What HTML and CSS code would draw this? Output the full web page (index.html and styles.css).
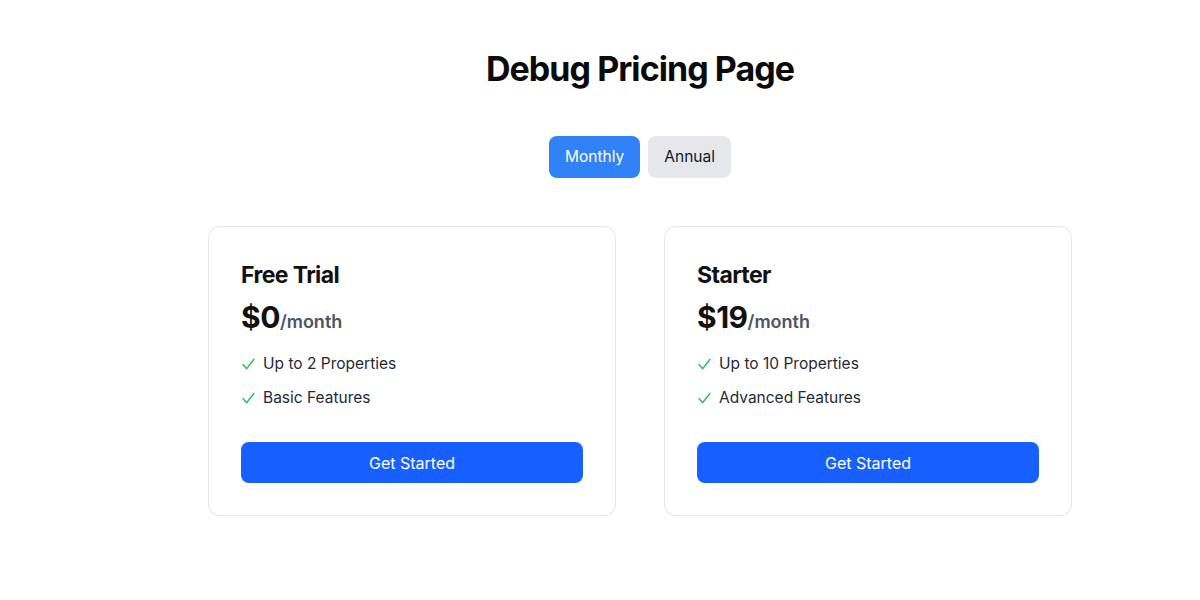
FILE: index.html
```html
<!DOCTYPE html>
<html lang="en">
<head>
<meta charset="utf-8">
<title>Debug Pricing Page</title>
<link rel="stylesheet" href="styles.css">
</head>
<body>
<main class="page">
  <h1 class="title">Debug Pricing Page</h1>
  <div class="toggle">
    <button class="toggle-btn active">Monthly</button>
    <button class="toggle-btn">Annual</button>
  </div>
  <section class="cards">
    <article class="card">
      <h2 class="plan">Free Trial</h2>
      <div class="price"><span class="amount">$0</span><span class="period">/month</span></div>
      <ul class="features">
        <li><svg class="check" viewBox="0 0 13 12" width="13" height="12"><polyline points="1,6.5 4.6,10.8 12,1.2"/></svg>Up to 2 Properties</li>
        <li><svg class="check" viewBox="0 0 13 12" width="13" height="12"><polyline points="1,6.5 4.6,10.8 12,1.2"/></svg>Basic Features</li>
      </ul>
      <button class="cta">Get Started</button>
    </article>
    <article class="card">
      <h2 class="plan">Starter</h2>
      <div class="price"><span class="amount">$19</span><span class="period">/month</span></div>
      <ul class="features">
        <li><svg class="check" viewBox="0 0 13 12" width="13" height="12"><polyline points="1,6.5 4.6,10.8 12,1.2"/></svg>Up to 10 Properties</li>
        <li><svg class="check" viewBox="0 0 13 12" width="13" height="12"><polyline points="1,6.5 4.6,10.8 12,1.2"/></svg>Advanced Features</li>
      </ul>
      <button class="cta">Get Started</button>
    </article>
  </section>
</main>
</body>
</html>
```

FILE: styles.css
```css
* { box-sizing: border-box; }
body {
  margin: 0;
  background: #ffffff;
  color: #111111;
  font-family: "Inter", "Noto Sans", sans-serif;
}
.page {
  padding: 49px 0 0 80px;
  display: flex;
  flex-direction: column;
  align-items: center;
}
.title {
  margin: 0;
  font-size: 34px;
  line-height: 40px;
  font-weight: 700;
  letter-spacing: -0.95px;
  color: #0b0b0b;
}
.toggle {
  margin-top: 47px;
  display: flex;
  gap: 8px;
}
.toggle-btn {
  font-family: inherit;
  font-size: 15.5px;
  line-height: 24px;
  padding: 9px 16px;
  border: 0;
  border-radius: 8px;
  background: #e5e7eb;
  color: #111827;
}
.toggle-btn.active {
  background: #3182f6;
  color: #ffffff;
}
.cards {
  margin-top: 48px;
  display: grid;
  grid-template-columns: 408px 408px;
  gap: 48px;
}
.card {
  border: 1px solid #e5e7eb;
  border-radius: 12px;
  padding: 32px;
  box-shadow: 0 1px 2px rgba(0,0,0,0.04);
  background: #fff;
}
.plan {
  margin: 0;
  font-size: 23px;
  line-height: 32px;
  font-weight: 700;
  letter-spacing: -0.6px;
}
.price {
  margin-top: 8px;
  height: 36px;
  display: flex;
  align-items: baseline;
}
.amount {
  font-size: 30px;
  line-height: 36px;
  font-weight: 700;
  letter-spacing: -0.5px;
}
.period {
  font-size: 18px;
  line-height: 24px;
  font-weight: 600;
  color: #4b5563;
}
.features {
  list-style: none;
  margin: 17px 0 0;
  padding: 0;
  display: flex;
  flex-direction: column;
  gap: 10px;
}
.features li {
  font-size: 15.5px;
  line-height: 24px;
  color: #1f2937;
  display: flex;
  align-items: center;
}
.check {
  flex: none;
  margin: 0 8px 0 1px;
  fill: none;
  stroke: #22c55e;
  stroke-width: 1.4;
  stroke-linecap: round;
  stroke-linejoin: round;
}
.cta {
  margin-top: 32px;
  width: 100%;
  height: 41px;
  border: 0;
  border-radius: 8px;
  background: #1760ff;
  color: #ffffff;
  font-family: inherit;
  font-size: 16px;
}
```
